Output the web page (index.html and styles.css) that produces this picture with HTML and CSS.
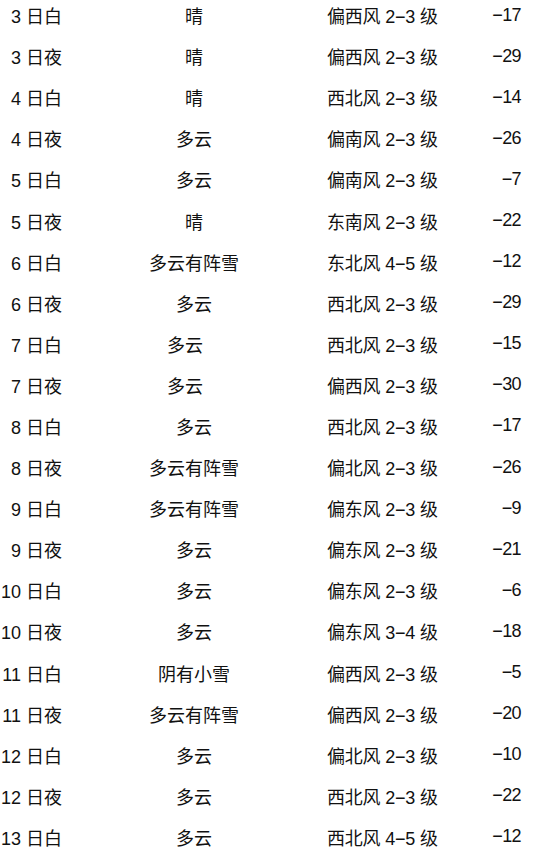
FILE: index.html
```html
<!DOCTYPE html>
<html lang="zh-CN">
<head>
<meta charset="utf-8">
<title>天气预报</title>
<link rel="stylesheet" href="styles.css">
</head>
<body>
<div class="table">
  <div class="row"><span class="date">3 日白</span><span class="weather">晴</span><span class="wind">偏西风 2−3 级</span><span class="temp">−17</span></div>
  <div class="row"><span class="date">3 日夜</span><span class="weather">晴</span><span class="wind">偏西风 2−3 级</span><span class="temp">−29</span></div>
  <div class="row"><span class="date">4 日白</span><span class="weather">晴</span><span class="wind">西北风 2−3 级</span><span class="temp">−14</span></div>
  <div class="row"><span class="date">4 日夜</span><span class="weather">多云</span><span class="wind">偏南风 2−3 级</span><span class="temp">−26</span></div>
  <div class="row"><span class="date">5 日白</span><span class="weather">多云</span><span class="wind">偏南风 2−3 级</span><span class="temp">−7</span></div>
  <div class="row"><span class="date">5 日夜</span><span class="weather">晴</span><span class="wind">东南风 2−3 级</span><span class="temp">−22</span></div>
  <div class="row"><span class="date">6 日白</span><span class="weather">多云有阵雪</span><span class="wind">东北风 4−5 级</span><span class="temp">−12</span></div>
  <div class="row"><span class="date">6 日夜</span><span class="weather">多云</span><span class="wind">西北风 2−3 级</span><span class="temp">−29</span></div>
  <div class="row"><span class="date">7 日白</span><span class="weather shift">多云</span><span class="wind">西北风 2−3 级</span><span class="temp">−15</span></div>
  <div class="row"><span class="date">7 日夜</span><span class="weather shift">多云</span><span class="wind">偏西风 2−3 级</span><span class="temp">−30</span></div>
  <div class="row"><span class="date">8 日白</span><span class="weather">多云</span><span class="wind">西北风 2−3 级</span><span class="temp">−17</span></div>
  <div class="row"><span class="date">8 日夜</span><span class="weather">多云有阵雪</span><span class="wind">偏北风 2−3 级</span><span class="temp">−26</span></div>
  <div class="row"><span class="date">9 日白</span><span class="weather">多云有阵雪</span><span class="wind">偏东风 2−3 级</span><span class="temp">−9</span></div>
  <div class="row"><span class="date">9 日夜</span><span class="weather">多云</span><span class="wind">偏东风 2−3 级</span><span class="temp">−21</span></div>
  <div class="row"><span class="date">10 日白</span><span class="weather">多云</span><span class="wind">偏东风 2−3 级</span><span class="temp">−6</span></div>
  <div class="row"><span class="date">10 日夜</span><span class="weather">多云</span><span class="wind">偏东风 3−4 级</span><span class="temp">−18</span></div>
  <div class="row"><span class="date">11 日白</span><span class="weather">阴有小雪</span><span class="wind">偏西风 2−3 级</span><span class="temp">−5</span></div>
  <div class="row"><span class="date">11 日夜</span><span class="weather">多云有阵雪</span><span class="wind">偏西风 2−3 级</span><span class="temp">−20</span></div>
  <div class="row"><span class="date">12 日白</span><span class="weather">多云</span><span class="wind">偏北风 2−3 级</span><span class="temp">−10</span></div>
  <div class="row"><span class="date">12 日夜</span><span class="weather">多云</span><span class="wind">西北风 2−3 级</span><span class="temp">−22</span></div>
  <div class="row"><span class="date">13 日白</span><span class="weather">多云</span><span class="wind">西北风 4−5 级</span><span class="temp">−12</span></div>
</div>
</body>
</html>
```

FILE: styles.css
```css
html, body {
  margin: 0;
  padding: 0;
  background: #ffffff;
}

body {
  color: #111111;
  font-family: "Liberation Sans", "Noto Sans CJK SC", sans-serif;
  font-size: 18px;
  overflow: hidden;
}

.table {
  margin-top: -5.5px;
}

.row {
  display: grid;
  grid-template-columns: 62px 264px 130px 65px;
  height: 41.1px;
  align-items: center;
  white-space: nowrap;
}

.date {
  text-align: right;
}

.weather {
  text-align: center;
}

.weather.shift {
  padding-right: 18px;
}

.wind {
  text-align: left;
  padding-left: 1px;
  letter-spacing: -0.2px;
}

.temp {
  text-align: right;
  letter-spacing: -0.6px;
}
```
